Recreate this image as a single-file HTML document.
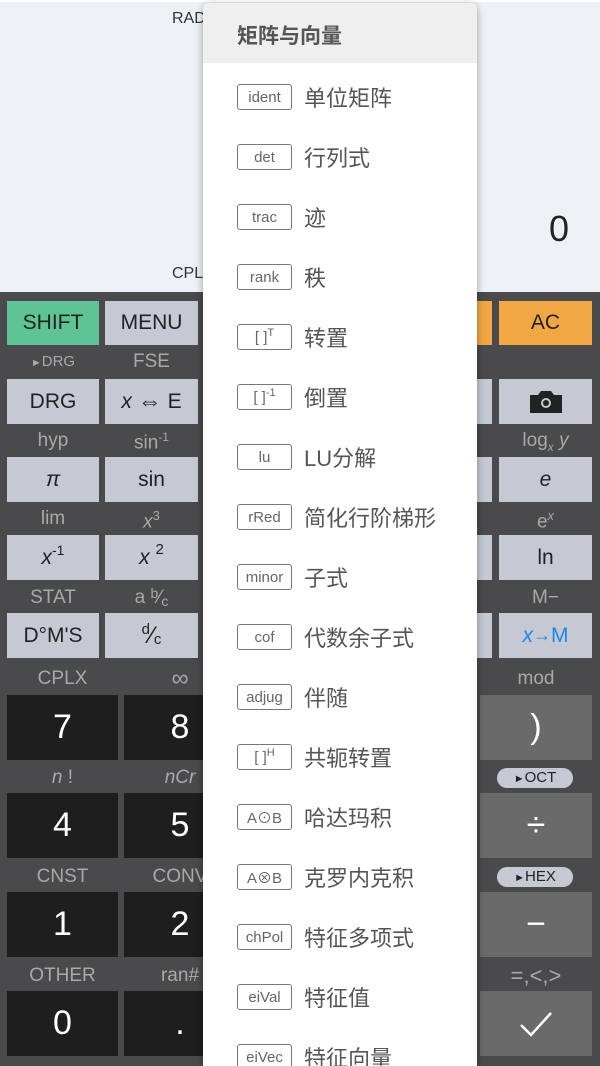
<!DOCTYPE html>
<html><head><meta charset="utf-8">
<style>
*{margin:0;padding:0;box-sizing:border-box}
body{width:600px;height:1066px;overflow:hidden;position:relative;background:#4a4a4c;font-family:"Liberation Sans","Noto Sans CJK SC",sans-serif}
.disp{position:absolute;left:0;top:0;width:600px;height:292px;background:#edf1f6;border-top:2px solid #fff}
.k{position:absolute;display:flex;align-items:center;justify-content:center;color:#222;font-size:21px}
.l{background:#c4c9d3}
.d{background:#1e1e1e;color:#fff;font-size:34px}
.o{background:#6a6a6a;color:#fff;font-size:34px}
.lb{position:absolute;color:#a9a9a9;font-size:19px;text-align:center}
.pop{position:absolute;left:203px;top:3px;width:274px;height:1063px;background:#fff;border-radius:6px 6px 0 0;box-shadow:0 2px 8px rgba(0,0,0,.35);overflow:hidden}
.ph{height:60px;background:#efefef;font-size:21px;font-weight:bold;color:#555;padding:17px 0 0 34px}
.it{position:absolute;left:34px;height:26px;display:flex;align-items:center}
.bx{width:55px;height:26px;border:1.5px solid #777;border-radius:3px;font-size:15px;color:#666;display:flex;align-items:center;justify-content:center}
.tx{margin-left:12px;font-size:22px;color:#555}
.bx sup{font-size:11px;position:relative;top:-4px;vertical-align:baseline}
</style></head><body>
<div class="disp">
<div style="position:absolute;left:172px;top:8px;font-size:16px;color:#333">RAD</div>
<div style="position:absolute;left:172px;top:263px;font-size:16px;color:#333">CPL</div>
<div style="position:absolute;left:549px;top:206px;font-size:36px;color:#222">0</div>
</div>

<div class="k" style="left:7px;top:301px;width:92px;height:44px;background:#5ec495">SHIFT</div>
<div class="k l" style="left:105px;top:301px;width:93px;height:44px">MENU</div>
<div class="k" style="left:400px;top:301px;width:92px;height:44px;background:#f0a744"></div>
<div class="k" style="left:499px;top:301px;width:93px;height:44px;background:#f0a744">AC</div>

<div class="lb" style="left:7px;top:353px;width:92px;font-size:15px"><span style="font-size:11px">►</span>DRG</div>
<div class="lb" style="left:105px;top:351px;width:93px">FSE</div>
<div class="k l" style="left:7px;top:379px;width:92px;height:45px">DRG</div>
<div class="k l" style="left:105px;top:379px;width:93px;height:45px"><i>x</i>&nbsp;<span style="font-size:24px">⇔</span>&nbsp;E</div>
<div class="k l" style="left:400px;top:379px;width:92px;height:45px"></div>
<div class="k l" style="left:499px;top:379px;width:93px;height:45px"><svg width="36" height="26" viewBox="0 0 36 26"><path d="M2 6h8l3-4h10l3 4h8v18H2z" fill="#222"/><circle cx="18" cy="14" r="5" fill="#c4c9d3"/><circle cx="18" cy="14" r="3" fill="#222"/></svg></div>

<div class="lb" style="left:7px;top:430px;width:92px">hyp</div>
<div class="lb" style="left:105px;top:430px;width:93px">sin<sup style="font-size:12px">-1</sup></div>
<div class="lb" style="left:499px;top:430px;width:93px">log<sub style="font-size:12px"><i>x</i></sub> <i>y</i></div>
<div class="k l" style="left:7px;top:457px;width:92px;height:45px"><i>π</i></div>
<div class="k l" style="left:105px;top:457px;width:93px;height:45px">sin</div>
<div class="k l" style="left:400px;top:457px;width:92px;height:45px"></div>
<div class="k l" style="left:499px;top:457px;width:93px;height:45px"><i>e</i></div>

<div class="lb" style="left:7px;top:508px;width:92px">lim</div>
<div class="lb" style="left:105px;top:508px;width:93px"><i>x</i><sup style="font-size:13px">3</sup></div>
<div class="lb" style="left:499px;top:508px;width:93px">e<sup style="font-size:13px"><i>x</i></sup></div>
<div class="k l" style="left:7px;top:535px;width:92px;height:45px"><i>x</i><span style="font-size:14px;position:relative;top:-8px">-1</span></div>
<div class="k l" style="left:105px;top:535px;width:93px;height:45px"><i>x</i>&nbsp;<span style="font-size:15px;position:relative;top:-8px">2</span></div>
<div class="k l" style="left:400px;top:535px;width:92px;height:45px"></div>
<div class="k l" style="left:499px;top:535px;width:93px;height:45px">ln</div>

<div class="lb" style="left:7px;top:587px;width:92px">STAT</div>
<div class="lb" style="left:105px;top:587px;width:93px">a <span style="font-size:14px;position:relative;top:-5px">b</span>⁄<span style="font-size:14px;position:relative;top:3px">c</span></div>
<div class="lb" style="left:499px;top:587px;width:93px">M−</div>
<div class="k l" style="left:7px;top:613px;width:92px;height:45px">D°M'S</div>
<div class="k l" style="left:105px;top:613px;width:93px;height:45px"><span style="font-size:15px;position:relative;top:-6px">d</span><span style="font-size:24px">⁄</span><span style="font-size:15px;position:relative;top:4px">c</span></div>
<div class="k l" style="left:400px;top:613px;width:92px;height:45px"></div>
<div class="k l" style="left:499px;top:613px;width:93px;height:45px;color:#1e88e5"><i>x</i><span style="font-size:18px">→</span>M</div>

<div class="lb" style="left:7px;top:668px;width:111px">CPLX</div>
<div class="lb" style="left:124px;top:665px;width:112px;font-size:24px">∞</div>
<div class="lb" style="left:480px;top:668px;width:112px">mod</div>
<div class="k d" style="left:7px;top:695px;width:111px;height:65px">7</div>
<div class="k d" style="left:124px;top:695px;width:112px;height:65px">8</div>
<div class="k o" style="left:480px;top:695px;width:112px;height:65px">)</div>

<div class="lb" style="left:7px;top:767px;width:111px"><i>n</i> !</div>
<div class="lb" style="left:124px;top:767px;width:112px"><i>nCr</i></div>
<div style="position:absolute;left:497px;top:768px;width:76px;height:20px;border-radius:10px;background:#c4c9d3;color:#222;font-size:15px;text-align:center;line-height:20px"><span style="font-size:11px">►</span>OCT</div>
<div class="k d" style="left:7px;top:793px;width:111px;height:65px">4</div>
<div class="k d" style="left:124px;top:793px;width:112px;height:65px">5</div>
<div class="k o" style="left:480px;top:793px;width:112px;height:65px">÷</div>

<div class="lb" style="left:7px;top:866px;width:111px">CNST</div>
<div class="lb" style="left:124px;top:866px;width:112px">CONV</div>
<div style="position:absolute;left:497px;top:867px;width:76px;height:20px;border-radius:10px;background:#c4c9d3;color:#222;font-size:15px;text-align:center;line-height:20px"><span style="font-size:11px">►</span>HEX</div>
<div class="k d" style="left:7px;top:892px;width:111px;height:65px">1</div>
<div class="k d" style="left:124px;top:892px;width:112px;height:65px">2</div>
<div class="k o" style="left:480px;top:892px;width:112px;height:65px">−</div>

<div class="lb" style="left:7px;top:965px;width:111px">OTHER</div>
<div class="lb" style="left:124px;top:965px;width:112px">ran#</div>
<div class="lb" style="left:480px;top:963px;width:112px;font-size:22px">=,&lt;,&gt;</div>
<div class="k d" style="left:7px;top:991px;width:111px;height:65px">0</div>
<div class="k d" style="left:124px;top:991px;width:112px;height:65px">.</div>
<div class="k o" style="left:480px;top:991px;width:112px;height:65px"><svg width="34" height="26" viewBox="0 0 34 26"><path d="M2 14l10 10L32 2" stroke="#fff" stroke-width="2.5" fill="none"/></svg></div>

<div class="pop">
<div class="ph">矩阵与向量</div>
<div class="it" style="top:81px"><div class="bx">ident</div><div class="tx">单位矩阵</div></div>
<div class="it" style="top:141px"><div class="bx">det</div><div class="tx">行列式</div></div>
<div class="it" style="top:201px"><div class="bx">trac</div><div class="tx">迹</div></div>
<div class="it" style="top:261px"><div class="bx">rank</div><div class="tx">秩</div></div>
<div class="it" style="top:321px"><div class="bx">[ ]<sup>T</sup></div><div class="tx">转置</div></div>
<div class="it" style="top:381px"><div class="bx">[ ]<sup>-1</sup></div><div class="tx">倒置</div></div>
<div class="it" style="top:441px"><div class="bx">lu</div><div class="tx">LU分解</div></div>
<div class="it" style="top:501px"><div class="bx">rRed</div><div class="tx">简化行阶梯形</div></div>
<div class="it" style="top:561px"><div class="bx">minor</div><div class="tx">子式</div></div>
<div class="it" style="top:621px"><div class="bx">cof</div><div class="tx">代数余子式</div></div>
<div class="it" style="top:681px"><div class="bx">adjug</div><div class="tx">伴随</div></div>
<div class="it" style="top:741px"><div class="bx">[ ]<sup>H</sup></div><div class="tx">共轭转置</div></div>
<div class="it" style="top:801px"><div class="bx">A⊙B</div><div class="tx">哈达玛积</div></div>
<div class="it" style="top:861px"><div class="bx">A⊗B</div><div class="tx">克罗内克积</div></div>
<div class="it" style="top:921px"><div class="bx">chPol</div><div class="tx">特征多项式</div></div>
<div class="it" style="top:981px"><div class="bx">eiVal</div><div class="tx">特征值</div></div>
<div class="it" style="top:1041px"><div class="bx">eiVec</div><div class="tx">特征向量</div></div>
</div>
</body></html>
